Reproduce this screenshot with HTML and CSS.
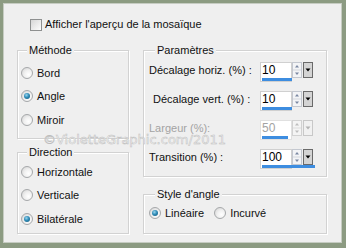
FILE: index.html
```html
<!DOCTYPE html>
<html lang="fr">
<head>
    <meta charset="UTF-8">
    <title>Mosaïque - Paramètres</title>
    <link rel="stylesheet" href="styles.css">
</head>
<body>
<div class="panel">
    <label class="check-row"><span class="checkbox"></span>Afficher l'aperçu de la mosaïque</label>

    <div class="columns">
        <div class="col col-left">
            <fieldset class="group group-methode">
                <legend>Méthode</legend>
                <div class="radio-row"><span class="radio"></span>Bord</div>
                <div class="radio-row"><span class="radio checked"></span>Angle</div>
                <div class="radio-row"><span class="radio"></span>Miroir</div>
            </fieldset>
            <fieldset class="group group-direction">
                <legend>Direction</legend>
                <div class="radio-row"><span class="radio"></span>Horizontale</div>
                <div class="radio-row"><span class="radio"></span>Verticale</div>
                <div class="radio-row"><span class="radio checked"></span>Bilatérale</div>
            </fieldset>
        </div>

        <div class="col col-right">
            <fieldset class="group group-params">
                <legend>Paramètres</legend>
                <div class="param-row">
                    <span class="param-label">Décalage horiz. (%) :</span>
                    <div class="spin">
                        <span class="spin-field">10</span>
                        <span class="spin-arrows"><svg width="10" height="16" viewBox="0 0 10 16"><rect x="0.5" y="0.5" width="9" height="15" fill="#f3f4f6" stroke="#c4c8d0"/><line x1="1" y1="8" x2="9" y2="8" stroke="#d3d6dc"/><path d="M3 5.5h4l-2-2.5z" fill="#7a88a2"/><path d="M3 10.5h4l-2 2.5z" fill="#7a88a2"/></svg></span>
                        <span class="spin-drop"><svg width="10" height="16" viewBox="0 0 10 16"><rect x="0.5" y="0.5" width="9" height="15" fill="#d4d4d4" stroke="#6a6a6a"/><path d="M2.5 6.5h5l-2.5 3z" fill="#000"/></svg></span>
                        <span class="spin-bar" style="width: 30px"></span>
                    </div>
                </div>
                <div class="param-row">
                    <span class="param-label indent">Décalage vert. (%) :</span>
                    <div class="spin">
                        <span class="spin-field">10</span>
                        <span class="spin-arrows"><svg width="10" height="16" viewBox="0 0 10 16"><rect x="0.5" y="0.5" width="9" height="15" fill="#f3f4f6" stroke="#c4c8d0"/><line x1="1" y1="8" x2="9" y2="8" stroke="#d3d6dc"/><path d="M3 5.5h4l-2-2.5z" fill="#7a88a2"/><path d="M3 10.5h4l-2 2.5z" fill="#7a88a2"/></svg></span>
                        <span class="spin-drop"><svg width="10" height="16" viewBox="0 0 10 16"><rect x="0.5" y="0.5" width="9" height="15" fill="#d4d4d4" stroke="#6a6a6a"/><path d="M2.5 6.5h5l-2.5 3z" fill="#000"/></svg></span>
                        <span class="spin-bar" style="width: 30px"></span>
                    </div>
                </div>
                <div class="param-row disabled">
                    <span class="param-label">Largeur (%):</span>
                    <div class="spin">
                        <span class="spin-field">50</span>
                        <span class="spin-arrows"><svg width="10" height="16" viewBox="0 0 10 16"><rect x="0.5" y="0.5" width="9" height="15" fill="#f4f4f4" stroke="#d2d2d2"/><line x1="1" y1="8" x2="9" y2="8" stroke="#dcdcdc"/><path d="M3 5.5h4l-2-2.5z" fill="#bdbdbd"/><path d="M3 10.5h4l-2 2.5z" fill="#bdbdbd"/></svg></span>
                        <span class="spin-drop"><svg width="10" height="16" viewBox="0 0 10 16"><rect x="0.5" y="0.5" width="9" height="15" fill="#f1f1f1" stroke="#c8c8c8"/><path d="M2.5 6.5h5l-2.5 3z" fill="#b4b4b4"/></svg></span>
                        <span class="spin-bar" style="width: 26px"></span>
                    </div>
                </div>
                <div class="param-row">
                    <span class="param-label">Transition (%) :</span>
                    <div class="spin">
                        <span class="spin-field">100</span>
                        <span class="spin-arrows"><svg width="10" height="16" viewBox="0 0 10 16"><rect x="0.5" y="0.5" width="9" height="15" fill="#f3f4f6" stroke="#c4c8d0"/><line x1="1" y1="8" x2="9" y2="8" stroke="#d3d6dc"/><path d="M3 5.5h4l-2-2.5z" fill="#7a88a2"/><path d="M3 10.5h4l-2 2.5z" fill="#7a88a2"/></svg></span>
                        <span class="spin-drop"><svg width="10" height="16" viewBox="0 0 10 16"><rect x="0.5" y="0.5" width="9" height="15" fill="#d4d4d4" stroke="#6a6a6a"/><path d="M2.5 6.5h5l-2.5 3z" fill="#000"/></svg></span>
                        <span class="spin-bar" style="width: 53px"></span>
                    </div>
                </div>
            </fieldset>
            <fieldset class="group group-style">
                <legend>Style d'angle</legend>
                <div class="inline-radios">
                    <div class="radio-row"><span class="radio checked"></span>Linéaire</div>
                    <div class="radio-row"><span class="radio"></span>Incurvé</div>
                </div>
            </fieldset>
        </div>
    </div>

    <div class="watermark">©VioletteGraphic.com/2011</div>
</div>
</body>
</html>
```

FILE: styles.css
```css
body {
    margin: 0;
    background-color: #8c9b82;
    font-family: "Liberation Sans", Arial, sans-serif;
    font-size: 11px;
    color: #111;
}
.panel {
    position: relative;
    margin: 3px 4px 5px 3px;
    height: 238px;
    border: 1px solid #c6ccc2;
    background-color: #efefef;
}
.check-row {
    display: flex;
    align-items: center;
    gap: 3px;
    height: 13px;
    margin: 14px 0 0 26px;
    line-height: 13px;
}
.checkbox {
    width: 12px;
    height: 12px;
    box-sizing: border-box;
    border: 1px solid #8e9090;
    background: linear-gradient(135deg, #d6d6d6, #fdfdfd);
}
.columns {
    display: flex;
    gap: 14px;
    margin-top: 13px;
    padding-left: 13px;
}
.col {
    display: flex;
    flex-direction: column;
}
.col-left {
    width: 112px;
    gap: 7px;
}
.col-right {
    width: 184px;
    gap: 11px;
}
.group {
    margin: 0;
    padding: 0;
    min-width: 0;
    box-sizing: border-box;
    border: 1px solid #d2d2d2;
    box-shadow: inset 1px 1px 0 #fff, 1px 1px 0 #fff;
}
.group legend {
    margin-left: 6px;
    padding: 0 2px;
    line-height: 13px;
    background-color: #efefef;
}
.group-methode {
    height: 95px;
    padding: 4px 0 0 3px;
}
.group-direction {
    height: 88px;
    padding: 1px 0 0 3px;
}
.group-params {
    height: 133px;
    padding: 5px 0 0 5px;
}
.group-style {
    height: 46px;
    padding: 4px 0 0 5px;
}
.radio-row {
    display: flex;
    align-items: center;
    gap: 4px;
    height: 23.5px;
}
.radio {
    position: relative;
    width: 12px;
    height: 12px;
    box-sizing: border-box;
    border-radius: 50%;
    border: 1px solid #a6a8aa;
    background: radial-gradient(circle at 65% 65%, #ffffff 0%, #f0f0f0 45%, #cfcfcf 100%);
}
.radio.checked::after {
    content: "";
    position: absolute;
    left: 2px;
    top: 2px;
    width: 6px;
    height: 6px;
    border-radius: 50%;
    background: radial-gradient(circle at 40% 35%, #9bd6ee 0%, #2f8cb8 45%, #12506f 100%);
}
.inline-radios {
    display: flex;
    gap: 10px;
}
.inline-radios .radio-row {
    height: 16px;
}
.param-row {
    display: flex;
    height: 20px;
    margin-bottom: 9px;
}
.param-label {
    width: 111px;
    line-height: 16px;
}
.param-label.indent {
    padding-left: 4px;
    width: 107px;
}
.spin {
    display: grid;
    grid-template-columns: 32px 10px 11px;
    grid-template-rows: 16px 4px;
}
.spin-field {
    grid-row: 1 / 3;
    grid-column: 1;
    box-sizing: border-box;
    border: 1px solid #d0d0d0;
    background-color: #fff;
    padding-left: 1px;
    line-height: 14px;
    font-size: 12px;
    color: #000;
}
.spin-arrows {
    grid-row: 1;
    grid-column: 2;
    display: flex;
}
.spin-drop {
    grid-row: 1;
    grid-column: 3;
    display: flex;
    justify-content: flex-end;
}
.spin-bar {
    grid-row: 2;
    grid-column: 1 / 4;
    height: 3px;
    margin-left: 2px;
    background-color: #3d8de0;
}
.disabled .param-label,
.disabled .spin-field {
    color: #a3a3a3;
}
.disabled .spin-field {
    border-color: #e0e0e0;
}
.watermark {
    position: absolute;
    left: 39px;
    top: 131px;
    font-family: "DejaVu Sans", sans-serif;
    font-size: 13px;
    line-height: 10px;
    color: #f6f6f6;
    -webkit-text-stroke: 0.5px #bdbdbd;
    pointer-events: none;
}
```
